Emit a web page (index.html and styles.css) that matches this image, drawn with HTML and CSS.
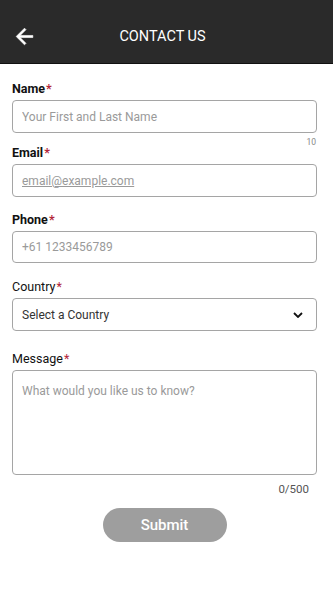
FILE: index.html
```html
<!DOCTYPE html>
<html lang="en">
<head>
<meta charset="utf-8">
<title>Contact Us</title>
<link rel="stylesheet" href="styles.css">
</head>
<body>
<header class="appbar">
  <button class="back" aria-label="Back">
    <svg viewBox="0 0 24 24" width="25" height="25"><path d="M20 11H7.83l5.59-5.59L12 4l-8 8 8 8 1.41-1.41L7.83 13H20v-2z" fill="#fff" stroke="#fff" stroke-width="0.6"/></svg>
  </button>
  <h1 class="title">CONTACT US</h1>
  <span class="spacer"></span>
</header>
<form class="form">
  <div class="field field-name">
    <label class="label bold">Name<span class="req">*</span></label>
    <input class="input" type="text" placeholder="Your First and Last Name">
    <div class="counter small">10</div>
  </div>
  <div class="field field-email">
    <label class="label bold">Email<span class="req">*</span></label>
    <input class="input email" type="email" placeholder="email@example.com">
  </div>
  <div class="field field-phone">
    <label class="label bold">Phone<span class="req">*</span></label>
    <input class="input phone" type="tel" placeholder="+61 1233456789">
  </div>
  <div class="field field-country">
    <label class="label">Country<span class="req">*</span></label>
    <div class="input select">
      <span>Select a Country</span>
      <svg class="chev" viewBox="0 0 10 6" width="10" height="6"><path d="M1 1l4 4 4-4" fill="none" stroke="#111" stroke-width="1.8"/></svg>
    </div>
  </div>
  <div class="field field-message">
    <label class="label">Message<span class="req">*</span></label>
    <textarea class="input area" placeholder="What would you like us to know?"></textarea>
    <div class="counter big">0/500</div>
  </div>
  <div class="actions">
    <button type="button" class="submit">Submit</button>
  </div>
</form>
</body>
</html>
```

FILE: styles.css
```css
* { box-sizing: border-box; }
body {
  margin: 0;
  font-family: Roboto, "Noto Sans", sans-serif;
  background: #fff;
  color: #111;
}
.appbar {
  height: 64px;
  background: #2a2a2a;
  border-bottom: 1px solid #111;
  display: flex;
  align-items: center;
  padding: 10px 12px 0 12px;
}
.back {
  width: 25px;
  height: 25px;
  padding: 0;
  border: 0;
  background: none;
  display: flex;
  margin-top: -1px;
}
.title {
  flex: 1;
  margin: 0;
  text-align: center;
  color: #fff;
  font-size: 14.5px;
  font-weight: 400;
  margin-right: 8px;
}
.spacer { width: 25px; }
.form {
  padding: 17px 16px 0 12px;
  display: flex;
  flex-direction: column;
}
.label {
  display: block;
  font-size: 12.5px;
  line-height: 16px;
  color: #111;
  margin-bottom: 3px;
}
.label.bold { font-weight: 700; }
.req { color: #b3263a; margin-left: 1px; }
.input {
  display: block;
  width: 100%;
  height: 33px;
  border: 1px solid #a5a5a5;
  border-radius: 4px;
  padding: 0 9px;
  font-family: Roboto, "Noto Sans", sans-serif;
  font-size: 12px;
  color: #333;
  background: #fff;
  outline: none;
}
.input::placeholder { color: #9a9a9a; }
.email::placeholder { text-decoration: underline; }
.counter {
  text-align: right;
  color: #888;
}
.counter.small {
  font-size: 8.5px;
  line-height: 10px;
  margin-top: 4px;
  padding-right: 1px;
}
.counter.big {
  font-size: 11.5px;
  line-height: 14px;
  margin-top: 7px;
  padding-right: 8px;
  color: #555;
}
.field-email { margin-top: -2px; }
.field-phone { margin-top: 15px; }
.field-phone .input { height: 32px; }
.field-country { margin-top: 16px; }
.field-message { margin-top: 20px; }
.select {
  display: flex;
  align-items: center;
  justify-content: space-between;
  color: #333;
  padding-right: 13px;
}
.area {
  height: 105px;
  padding: 12px 9px;
  resize: none;
  line-height: 16px;
}
.actions {
  display: flex;
  justify-content: center;
  margin-top: 12px;
}
.submit {
  width: 124px;
  height: 34px;
  border: 0;
  border-radius: 17px;
  background: #9e9e9e;
  color: #fff;
  font-family: Roboto, "Noto Sans", sans-serif;
  font-size: 15px;
  font-weight: 500;
}
```
